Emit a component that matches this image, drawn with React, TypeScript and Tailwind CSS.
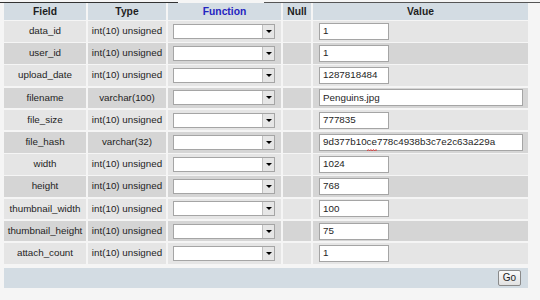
import React from "react";

type Row = { field: string; type: string; value: React.ReactNode; wide?: boolean };

function Squiggle({ children }: { children: React.ReactNode }) {
  return (
    <span className="relative">
      {children}
      <svg className="absolute left-0 top-full -mt-[1px] h-[3px] w-full" viewBox="0 0 10 3" preserveAspectRatio="none">
        <path d="M0 2 L1.25 0.5 L2.5 2 L3.75 0.5 L5 2 L6.25 0.5 L7.5 2 L8.75 0.5 L10 2" fill="none" stroke="#e03030" strokeWidth="0.8" />
      </svg>
    </span>
  );
}

const rows: Row[] = [
  { field: "data_id", type: "int(10) unsigned", value: "1" },
  { field: "user_id", type: "int(10) unsigned", value: "1" },
  { field: "upload_date", type: "int(10) unsigned", value: "1287818484" },
  { field: "filename", type: "varchar(100)", value: "Penguins.jpg", wide: true },
  { field: "file_size", type: "int(10) unsigned", value: "777835" },
  {
    field: "file_hash",
    type: "varchar(32)",
    value: (
      <>
        9d377b10
        <Squiggle>ce</Squiggle>
        778c4938b3c7e2c63a229a
      </>
    ),
    wide: true,
  },
  { field: "width", type: "int(10) unsigned", value: "1024" },
  { field: "height", type: "int(10) unsigned", value: "768" },
  { field: "thumbnail_width", type: "int(10) unsigned", value: "100" },
  { field: "thumbnail_height", type: "int(10) unsigned", value: "75" },
  { field: "attach_count", type: "int(10) unsigned", value: "1" },
];

function Select() {
  return (
    <div className="flex h-[15px] w-[102px] border border-[#a5a5a5] bg-white">
      <div className="flex-1" />
      <div className="flex w-[12px] items-center justify-center border-l border-[#c0c0c0] bg-[#e6e6e6]">
        <div className="h-0 w-0 border-x-[3px] border-t-[3px] border-x-transparent border-t-black" />
      </div>
    </div>
  );
}

export default function App() {
  return (
    <div
      className="h-[300px] w-[540px] overflow-hidden bg-[#f5f5f5] text-[9.8px] text-[#1e1e1e]"
      style={{ fontFamily: '"Liberation Sans", Arial, sans-serif' }}
    >
      <div className="flex h-[3px] items-end">
        <div className="h-[1px] w-[178px] bg-[#333]" />
        <div className="w-[86px]" />
        <div className="h-[1px] w-[276px] bg-[#555]" />
      </div>
      <div className="px-[4px]">
        <div className="grid grid-cols-[82px_78px_113px_28px_215px] gap-x-[2px] gap-y-[1.5px]">
          <div className="flex h-[16.5px] items-center justify-center bg-[#d3dce3] text-[10.3px] font-bold">Field</div>
          <div className="flex items-center justify-center bg-[#d3dce3] text-[10.3px] font-bold">Type</div>
          <div className="flex items-center justify-center bg-[#d3dce3] text-[10.3px] font-bold text-[#2424c0]">Function</div>
          <div className="flex items-center justify-center bg-[#d3dce3] text-[10.3px] font-bold">Null</div>
          <div className="flex items-center justify-center bg-[#d3dce3] text-[10.3px] font-bold">Value</div>
          {rows.map((r, i) => {
            const bg = i % 2 === 0 ? "bg-[#e5e5e5]" : "bg-[#d5d5d5]";
            return (
              <React.Fragment key={r.field}>
                <div className={`flex h-[20.7px] items-center justify-center ${bg}`}>{r.field}</div>
                <div className={`flex items-center justify-center ${bg}`}>{r.type}</div>
                <div className={`flex items-center pl-[5px] ${bg}`}>
                  <Select />
                </div>
                <div className={bg} />
                <div className={`flex items-center pl-[6px] ${bg}`}>
                  <div
                    className={`flex h-[17px] items-center whitespace-nowrap border border-[#a5a5a5] bg-white pl-[3px] ${
                      r.wide ? "w-[204px]" : "w-[70px]"
                    }`}
                  >
                    {r.value}
                  </div>
                </div>
              </React.Fragment>
            );
          })}
        </div>
        <div className="mt-[4px] flex h-[20px] w-[524px] items-center justify-end bg-[#d3dce3] pr-[7px]">
          <div className="flex h-[16px] w-[23px] items-center justify-center rounded-[2px] border border-[#8a8a8a] bg-gradient-to-b from-[#fafafa] to-[#e2e2e2] text-[10px]">
            Go
          </div>
        </div>
      </div>
    </div>
  );
}
